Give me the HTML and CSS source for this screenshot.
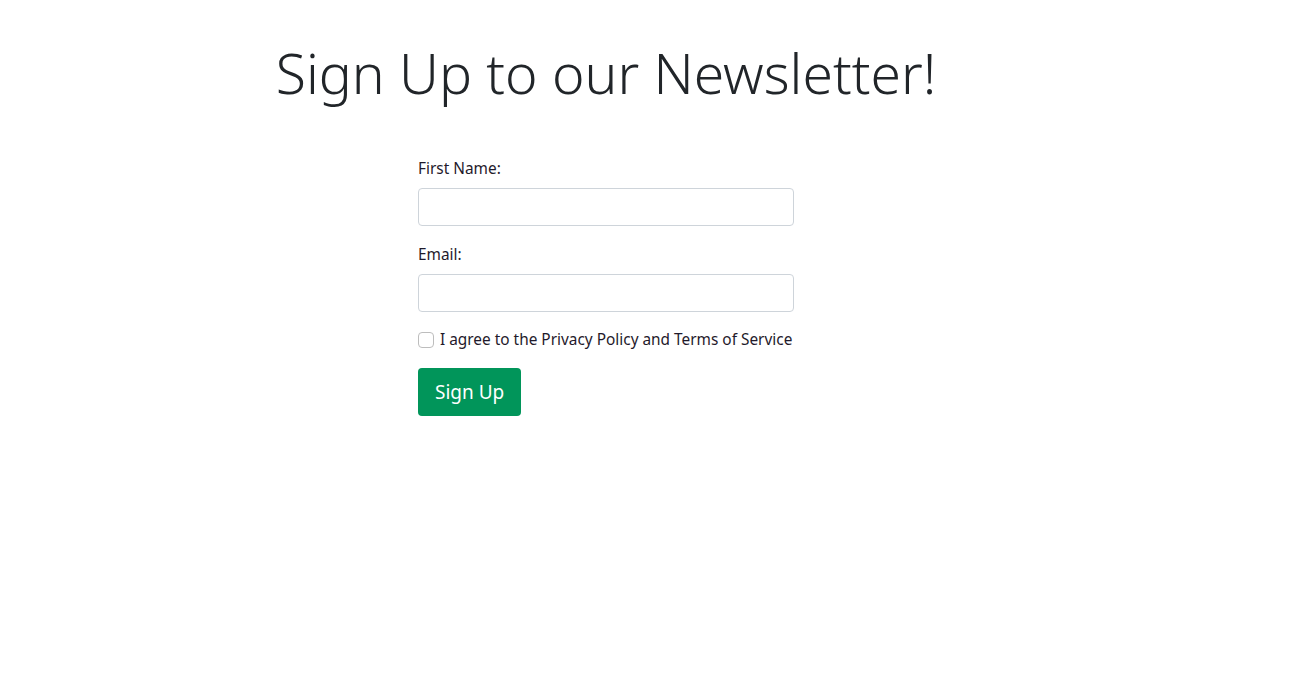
FILE: index.html
```html
<!DOCTYPE html>
<html lang="en">
<head>
<meta charset="utf-8">
<title>Newsletter Sign Up</title>
<link rel="stylesheet" href="styles.css">
</head>
<body>
<main class="page">
  <h1 class="title">Sign Up to our Newsletter!</h1>
  <form class="signup">
    <div class="field">
      <label class="label" for="fname">First Name:</label>
      <input class="input" type="text" id="fname">
    </div>
    <div class="field">
      <label class="label" for="email">Email:</label>
      <input class="input" type="email" id="email">
    </div>
    <div class="check">
      <input class="checkbox" type="checkbox" id="agree">
      <label class="check-label" for="agree">I agree to the Privacy Policy and Terms of Service</label>
    </div>
    <button class="btn" type="button">Sign Up</button>
  </form>
</main>
</body>
</html>
```
FILE: styles.css
```css
* { box-sizing: border-box; }
html, body { margin: 0; padding: 0; background: #fff; }
body {
  font-family: "Noto Sans", "Open Sans", sans-serif;
  color: #212529;
  font-size: 16px;
}
.page {
  width: 1212px;
  display: flex;
  flex-direction: column;
  align-items: center;
  padding-top: 38px;
}
.title {
  margin: 0;
  font-weight: 300;
  font-size: 55.2px;
  line-height: 70px;
  color: #212529;
}
.signup {
  width: 376px;
  margin-top: 47px;
  display: flex;
  flex-direction: column;
}
.field { display: flex; flex-direction: column; margin-bottom: 15px; }
.label { font-size: 15.4px; line-height: 24px; padding-top: 2px; margin-bottom: 7px; color: #1f1a2b; }
.input {
  height: 38px;
  border: 1px solid #ced4da;
  border-radius: 4px;
  font: inherit;
  padding: 6px 12px;
}
.check { display: flex; align-items: center; gap: 6px; margin-top: 1px; height: 24px; }
.checkbox {
  appearance: none;
  width: 16px; height: 16px; margin: 0;
  border: 1px solid #bdbdbd;
  border-radius: 4px;
  background: #fff;
}
.check-label { font-size: 15.4px; line-height: 24px; color: #1f1a2b; }
.btn {
  margin-top: 16px;
  align-self: flex-start;
  background: #01955a;
  color: #fff;
  border: none;
  border-radius: 4px;
  font-family: inherit;
  font-size: 19px;
  height: 48px;
  padding: 0 17px;
}
```
